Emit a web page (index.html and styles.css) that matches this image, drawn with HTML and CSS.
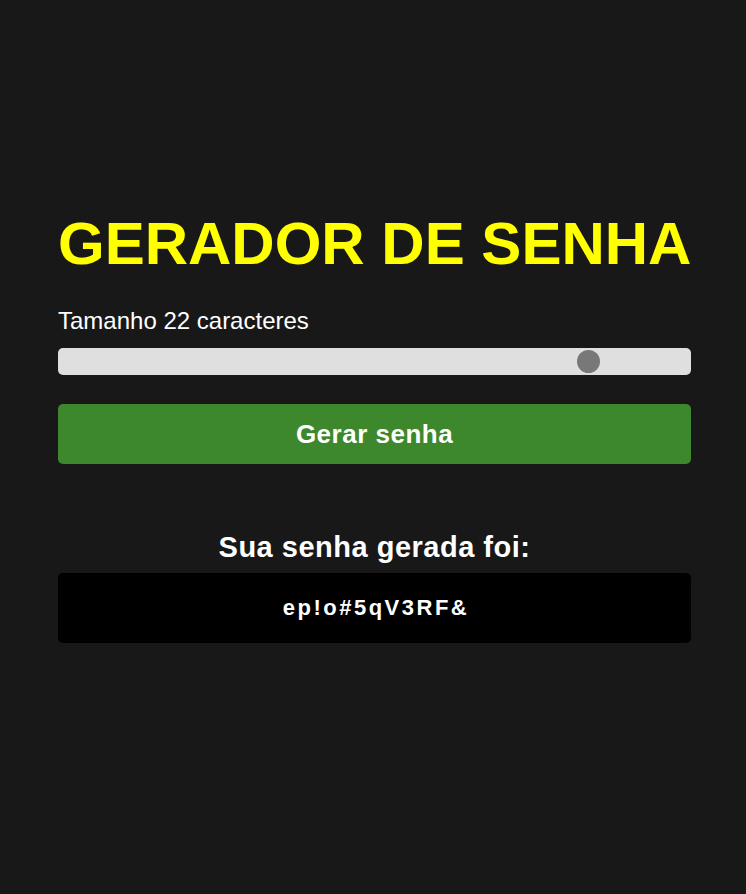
FILE: index.html
```html
<!DOCTYPE html>
<html lang="pt-BR">
<head>
<meta charset="utf-8">
<title>Gerador de senha</title>
<link rel="stylesheet" href="styles.css">
</head>
<body>
<main class="container">
  <h1 class="title">GERADOR DE SENHA</h1>
  <label class="size-label" for="size">Tamanho <span>22</span> caracteres</label>
  <input class="slider" id="size" type="range" min="5" max="25" value="22">
  <button class="generate">Gerar senha</button>
  <h2 class="result-title">Sua senha gerada foi:</h2>
  <div class="password">ep!o#5qV3RF&amp;</div>
</main>
</body>
</html>
```
FILE: styles.css
```css
html, body {
  margin: 0;
  padding: 0;
}
body {
  background: #181818;
  font-family: "Liberation Sans", Arial, sans-serif;
  color: #ffffff;
  min-height: 894px;
}
.container {
  width: 633px;
  margin: 0 0 0 58px;
  padding-top: 209px;
  display: flex;
  flex-direction: column;
}
.title {
  margin: 0;
  font-size: 60px;
  line-height: 69px;
  font-weight: bold;
  color: #ffff00;
  white-space: nowrap;
}
.size-label {
  margin-top: 29px;
  font-size: 24px;
  line-height: 28px;
}
.slider {
  -webkit-appearance: none;
  appearance: none;
  margin: 13px 0 0 0;
  width: 100%;
  height: 27px;
  background: #dfdfdf;
  border-radius: 5px;
  outline: none;
}
.slider::-webkit-slider-thumb {
  -webkit-appearance: none;
  appearance: none;
  width: 23px;
  height: 23px;
  border-radius: 50%;
  background: #787878;
  border: none;
}
.generate {
  margin-top: 29px;
  height: 60px;
  border: none;
  border-radius: 5px;
  background: #3d882c;
  color: #ffffff;
  font-family: "Liberation Sans", Arial, sans-serif;
  font-size: 26px;
  font-weight: bold;
  letter-spacing: 0.5px;
}
.result-title {
  margin: 66px 0 0 0;
  font-size: 29px;
  line-height: 34px;
  font-weight: bold;
  letter-spacing: 0.5px;
  text-align: center;
}
.password {
  margin-top: 9px;
  height: 70px;
  background: #000000;
  border-radius: 5px;
  display: flex;
  align-items: center;
  justify-content: center;
  font-size: 22px;
  font-weight: bold;
  letter-spacing: 2.5px;
  padding-left: 3px;
}
```
